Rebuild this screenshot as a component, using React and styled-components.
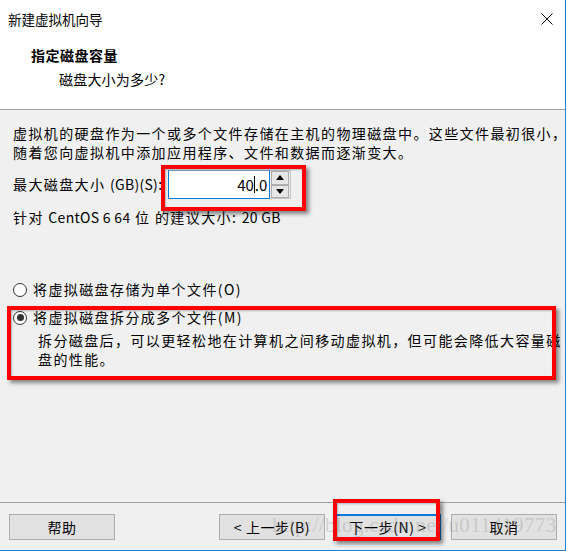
import React from "react";
import styled, { createGlobalStyle } from "styled-components";

const GlobalStyle = createGlobalStyle`
  html, body { margin: 0; padding: 0; background: #ffffff; }
  body { font-family: "Noto Sans CJK SC", "Noto Sans", sans-serif; color: #000; }
`;

const Window = styled.div`
  width: 565px;
  height: 550px;
  border-right: 1px solid #1883d7;
  border-bottom: 1px solid #1883d7;
  display: flex;
  flex-direction: column;
  overflow: hidden;
  position: relative;
`;

const Header = styled.header`
  background: #ffffff;
  height: 109px;
  border-bottom: 1px solid #a0a0a0;
  display: flex;
  flex-direction: column;
  flex: none;
`;

const TitleBar = styled.div`
  height: 38px;
  display: flex;
  align-items: center;
  justify-content: space-between;
  padding: 0 12px 0 8px;
`;

const Title = styled.span`
  font-size: 13.5px;
  line-height: 20px;
`;

const CloseIcon = styled.svg`
  width: 12px;
  height: 12px;
  display: block;
`;

const HeadBlock = styled.div`
  padding: 7px 0 0 31px;
  display: flex;
  flex-direction: column;
  gap: 4px;
`;

const Heading = styled.div`
  font-size: 14px;
  font-weight: 700;
  letter-spacing: 0.5px;
  line-height: 20px;
`;

const SubHeading = styled.div`
  font-size: 14px;
  letter-spacing: 0.2px;
  line-height: 20px;
  padding-left: 28px;
`;

const Body = styled.main`
  flex: 1;
  background: #f0f0f0;
  padding: 14px 0 0 13px;
  display: flex;
  flex-direction: column;
  font-size: 14px;
  letter-spacing: 1.4px;
`;

const Para = styled.p`
  margin: 0;
  line-height: 19px;
  white-space: nowrap;
`;

const SizeRow = styled.div`
  margin-top: 8px;
  display: flex;
  align-items: center;
  gap: 6px;
  height: 29px;
`;

const Label = styled.span`
  line-height: 19px;
  white-space: nowrap;
`;

const SpinBox = styled.div`
  position: relative;
  display: flex;
  height: 29px;
`;

const Field = styled.div`
  width: 98px;
  height: 27px;
  background: #ffffff;
  border: 1px solid #0078d7;
  border-top-color: #7a9cc0;
  display: flex;
  align-items: center;
  justify-content: flex-end;
  padding-right: 2px;
  font-size: 15px;
  letter-spacing: 0;
`;

const Caret = styled.span`
  display: inline-block;
  width: 1px;
  height: 17px;
  background: #000;
  vertical-align: middle;
`;

const Spinner = styled.div`
  width: 20px;
  height: 27px;
  border: 1px solid #c4c4c4;
  border-left: none;
  display: flex;
  flex-direction: column;
  background: #f0f0f0;
`;

const SpinBtn = styled.div`
  flex: 1;
  display: flex;
  align-items: center;
  justify-content: center;
  border: 1px solid #adadad;
  background: #e5e5e5;
  margin: 0 1px;
`;

const RedFrame = styled.div`
  position: absolute;
  left: ${(p) => p.$l}px;
  top: ${(p) => p.$t}px;
  right: ${(p) => p.$r}px;
  bottom: ${(p) => p.$b}px;
  border: 4px solid #ff0000;
  box-shadow: 3px 3px 4px rgba(0, 0, 0, 0.45), inset 1px 1px 2px rgba(0, 0, 0, 0.25);
  pointer-events: none;
`;

const Hint = styled.div`
  margin-top: 9px;
  line-height: 19px;
  white-space: nowrap;
`;

const Latin = styled.span`
  letter-spacing: 0.3px;
`;

const Options = styled.div`
  margin-top: 53px;
  display: flex;
  flex-direction: column;
  gap: 9px;
`;

const OptionBlock = styled.div`
  position: relative;
  display: flex;
  flex-direction: column;
  gap: 4px;
`;

const RadioRow = styled.label`
  display: flex;
  align-items: center;
  gap: 6px;
  line-height: 19px;
  height: 19px;
  white-space: nowrap;
`;

const RadioCircle = styled.span`
  width: 12px;
  height: 12px;
  border: 1px solid #333333;
  border-radius: 50%;
  background: #ffffff;
  display: flex;
  align-items: center;
  justify-content: center;
  flex: none;
  &::after {
    content: "";
    width: 7px;
    height: 7px;
    border-radius: 50%;
    background: ${(p) => (p.$checked ? "#333333" : "transparent")};
  }
`;

const Desc = styled.div`
  padding-left: 25px;
  line-height: 19px;
  white-space: nowrap;
`;

const Footer = styled.footer`
  box-sizing: border-box;
  flex: none;
  height: 48px;
  background: #f0f0f0;
  border-top: 1px solid #a0a0a0;
  display: flex;
  align-items: flex-start;
  padding: 11px 8px 0 9px;
  gap: 10px;
  position: relative;
`;

const Spacer = styled.div`
  flex: 1;
`;

const Button = styled.button`
  position: relative;
  box-sizing: border-box;
  flex: none;
  width: 106px;
  height: 26px;
  background: #e1e1e1;
  border: 1px solid ${(p) => (p.$focused ? "#0078d7" : "#adadad")};
  box-shadow: ${(p) => (p.$focused ? "inset 0 0 0 1px #0078d7" : "none")};
  font-family: "Noto Sans CJK SC", "Noto Sans", sans-serif;
  font-size: 14px;
  letter-spacing: 0.6px;
  color: #000;
  padding: 0;
  display: flex;
  align-items: center;
  justify-content: center;
  line-height: 20px;
`;

const Watermark = styled.div`
  position: absolute;
  left: 272px;
  top: 10px;
  font-family: "Liberation Serif", serif;
  font-size: 21px;
  color: rgba(120, 120, 120, 0.25);
  letter-spacing: 0.4px;
  white-space: nowrap;
  pointer-events: none;
`;

export default function App() {
  return (
    <>
      <GlobalStyle />
      <Window>
        <Header>
          <TitleBar>
            <Title>新建虚拟机向导</Title>
            <CloseIcon viewBox="0 0 12 12">
              <path d="M0.5 0.5 L11.5 11.5 M11.5 0.5 L0.5 11.5" stroke="#000" strokeWidth="1" fill="none" />
            </CloseIcon>
          </TitleBar>
          <HeadBlock>
            <Heading>指定磁盘容量</Heading>
            <SubHeading>磁盘大小为多少?</SubHeading>
          </HeadBlock>
        </Header>
        <Body>
          <Para>
            虚拟机的硬盘作为一个或多个文件存储在主机的物理磁盘中。这些文件最初很小，
            <br />
            随着您向虚拟机中添加应用程序、文件和数据而逐渐变大。
          </Para>
          <SizeRow>
            <Label>
              最大磁盘大小 <Latin>(GB)(S):</Latin>
            </Label>
            <SpinBox>
              <Field>
                40<Caret />.0
              </Field>
              <Spinner>
                <SpinBtn>
                  <svg width="8" height="5" viewBox="0 0 8 5">
                    <polygon points="0,5 8,5 4,0" fill="#000" />
                  </svg>
                </SpinBtn>
                <SpinBtn>
                  <svg width="8" height="5" viewBox="0 0 8 5">
                    <polygon points="0,0 8,0 4,5" fill="#000" />
                  </svg>
                </SpinBtn>
              </Spinner>
              <RedFrame $l={-7} $t={-5} $r={-15} $b={-12} />
            </SpinBox>
          </SizeRow>
          <Hint>
            针对 <Latin>CentOS 6 64</Latin> 位 的建议大小: <Latin>20 GB</Latin>
          </Hint>
          <Options>
            <RadioRow>
              <RadioCircle />
              将虚拟磁盘存储为单个文件(O)
            </RadioRow>
            <OptionBlock>
              <RadioRow>
                <RadioCircle $checked />
                将虚拟磁盘拆分成多个文件(M)
              </RadioRow>
              <Desc>
                拆分磁盘后，可以更轻松地在计算机之间移动虚拟机，但可能会降低大容量磁
                <br />
                盘的性能。
              </Desc>
              <RedFrame $l={-6} $t={-2} $r={9} $b={-11} />
            </OptionBlock>
          </Options>
        </Body>
        <Footer>
          <Button>帮助</Button>
          <Spacer />
          <Button>&lt; 上一步(B)</Button>
          <Button $focused>
            下一步(N) &gt;
            <RedFrame $l={-3} $t={-16} $r={0} $b={-2} />
          </Button>
          <Button>取消</Button>
          <Watermark>http://blog.csdn.net/u011419773</Watermark>
        </Footer>
      </Window>
    </>
  );
}
